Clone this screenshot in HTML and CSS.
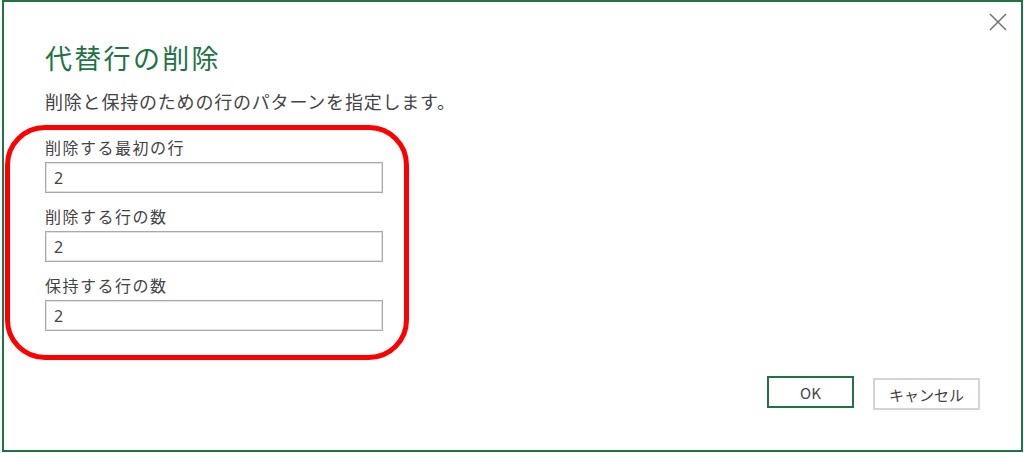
FILE: index.html
```html
<!DOCTYPE html>
<html>
	<head>
		<meta charset = "utf-8">
		<title>代替行の削除</title>
		<link rel="stylesheet" href="styles.css">
	</head>
	<body>
		<div class = "dialog">
			<button class = "close-button" title = "閉じる">
				<svg width = "18" height = "18" viewBox = "0 0 18 18">
					<path d = "M1 1 L17 17 M17 1 L1 17" stroke = "#6b6b6b" stroke-width = "1.4" fill = "none"/>
				</svg>
			</button>

			<h1 class = "dialog-title">代替行の削除</h1>
			<p class = "dialog-subtitle">削除と保持のための行のパターンを指定します。</p>

			<div class = "fields">
				<label class = "field-label" for = "firstRow">削除する最初の行</label>
				<input class = "field-input" id = "firstRow" type = "text" value = "2">

				<label class = "field-label" for = "removeCount">削除する行の数</label>
				<input class = "field-input" id = "removeCount" type = "text" value = "2">

				<label class = "field-label" for = "keepCount">保持する行の数</label>
				<input class = "field-input" id = "keepCount" type = "text" value = "2">
			</div>

			<div class = "button-row">
				<button class = "btn btn-ok">OK</button>
				<button class = "btn btn-cancel">キャンセル</button>
			</div>

			<!-- red marker around the inputs -->
			<div class = "highlight"></div>
		</div>
	</body>
</html>
```

FILE: styles.css
```css
body {
	margin: 0;
	background: #ffffff;
	font-family: "Noto Sans CJK JP", "Noto Sans", sans-serif;
	color: #444444;
}

.dialog {
	position: relative;
	display: flex;
	flex-direction: column;
	box-sizing: border-box;
	width: 1021px;
	height: 452px;
	margin-left: 2px;
	border: 2px solid #217346;
	padding: 0 41px 40px 41px;
	background: #ffffff;
}

.close-button {
	position: absolute;
	top: 10px;
	right: 13px;
	width: 20px;
	height: 20px;
	padding: 1px;
	border: none;
	background: none;
}

.dialog-title {
	margin: 38px 0 0 0;
	font-size: 27px;
	line-height: 36px;
	font-weight: normal;
	color: #217346;
	letter-spacing: 2.3px;
}

.dialog-subtitle {
	margin: 13px 0 0 0;
	font-size: 18px;
	line-height: 24px;
	letter-spacing: 0.8px;
}

.fields {
	display: flex;
	flex-direction: column;
	width: 338px;
	margin-top: 22px;
}

.field-label {
	font-size: 16px;
	line-height: 24px;
	letter-spacing: 1.5px;
	margin-bottom: 3px;
}

.field-input {
	box-sizing: border-box;
	width: 338px;
	height: 31px;
	margin-bottom: 11px;
	padding: 0 8px;
	border: 1px solid #a9a9a9;
	box-shadow: inset 0 0 0 1px #e2e2e2;
	font-family: "Noto Sans", sans-serif;
	font-size: 16px;
	color: #444444;
}

.button-row {
	display: flex;
	justify-content: flex-end;
	align-items: flex-start;
	gap: 19px;
	margin-top: auto;
}

.btn {
	box-sizing: border-box;
	height: 32px;
	background: #ffffff;
	font-family: "Noto Sans CJK JP", "Noto Sans", sans-serif;
	font-size: 15px;
	color: #444444;
	padding: 0;
}

.btn-ok {
	width: 87px;
	border: 2px solid #217346;
}

.btn-cancel {
	width: 107px;
	margin-top: 2px;
	border: 2px solid #d4d4d4;
}

.highlight {
	position: absolute;
	left: 1px;
	top: 123px;
	width: 404px;
	height: 235px;
	box-sizing: border-box;
	border: 5px solid #ff0000;
	border-radius: 40px;
	pointer-events: none;
}
```
